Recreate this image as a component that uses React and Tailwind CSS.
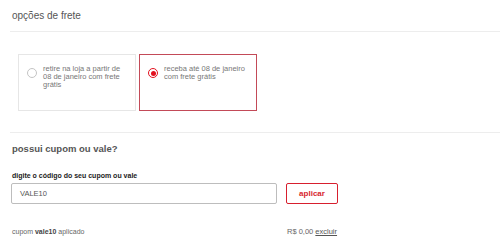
import React from 'react';

const Radio = ({ checked }) =>
    checked ? (
        <div className="mt-[3px] w-[10px] h-[10px] shrink-0 rounded-full border-[1.5px] border-[#e3101e] flex items-center justify-center">
            <div className="w-[5px] h-[5px] rounded-full bg-[#e3101e]" />
        </div>
    ) : (
        <div className="mt-[3px] w-[10px] h-[10px] shrink-0 rounded-full border border-[#c4c4c4] bg-white" />
    );

const ShippingCard = ({ checked, children }) => (
    <div
        className={`w-[118px] h-[57px] flex items-start pl-[8px] pt-[10px] border ${
            checked ? 'border-[#c34a58]' : 'border-[#e6e6e6]'
        }`}
    >
        <Radio checked={checked} />
        <p className="ml-[6px] w-[84px] text-[7.5px] leading-[8px] text-[#777]">{children}</p>
    </div>
);

export default function App() {
    return (
        <div className="w-[500px] h-[241px] overflow-hidden bg-white pl-[10px] font-['Liberation_Sans',Arial,sans-serif]">
            {/* shipping options */}
            <h2 className="h-[31px] pt-[10px] pl-[2px] text-[10px] leading-[12px] text-[#555]">opções de frete</h2>
            <div className="h-px bg-[#ededed]" />

            <div className="flex gap-[3px] pt-[22px] pl-[8px]">
                <ShippingCard>retire na loja a partir de 08 de janeiro com frete grátis</ShippingCard>
                <ShippingCard checked>receba até 08 de janeiro com frete grátis</ShippingCard>
            </div>

            <div className="mt-[21px] h-px bg-[#ededed]" />

            {/* coupon */}
            <h2 className="mt-[10px] pl-[2px] text-[9.5px] leading-[12px] font-bold text-[#555]">possui cupom ou vale?</h2>
            <label className="block mt-[16px] pl-[2px] text-[7px] leading-[9px] font-bold text-[#222]">
                digite o código do seu cupom ou vale
            </label>
            <div className="flex items-center mt-[3px] ml-[1px]">
                <div className="w-[266px] h-[21px] border border-[#bdbdbd] rounded-[2px] flex items-center pl-[8px] text-[7.5px] text-[#555]">
                    VALE10
                </div>
                <button className="ml-[9px] w-[52px] h-[21px] border-[1.5px] border-[#d71f2e] rounded-[2px] text-[8px] font-bold text-[#d71f2e]">
                    aplicar
                </button>
            </div>

            <div className="flex mt-[23px] text-[7px] leading-[9px] text-[#666]">
                <span className="w-[277px] pl-[2px]">
                    cupom <b className="text-[#444]">vale10</b> aplicado
                </span>
                <span className="text-[7.5px]">
                    R$ 0,00 <span className="underline text-[#555]">excluir</span>
                </span>
            </div>
        </div>
    );
}
